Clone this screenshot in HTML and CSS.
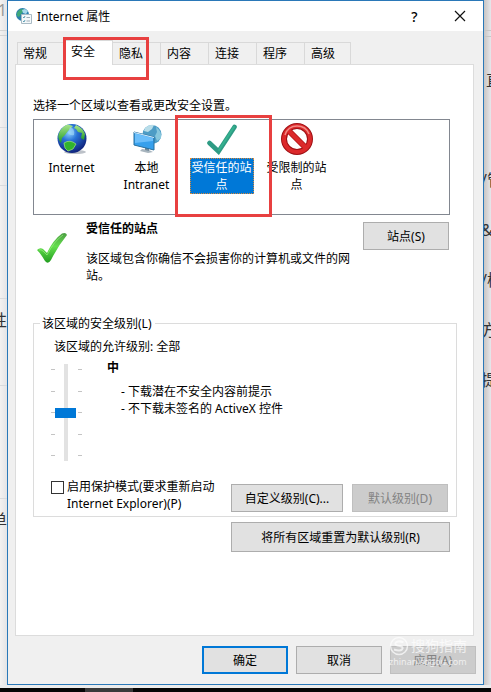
FILE: index.html
```html
<!DOCTYPE html>
<html lang="zh-CN">
<head>
<meta charset="utf-8">
<meta name="viewport" content="width=device-width, initial-scale=1">
<title>Internet 属性</title>
<link rel="stylesheet" href="styles.css">
</head>
<body>
<div class="desktop">
  <div class="behind behind-left" aria-hidden="true">
    <span class="faint">01</span><span class="low">性</span><span class="last">单</span>
  </div>
  <main class="dialog">
    <header class="titlebar">
      <svg class="app-icon" viewBox="0 0 16 16" width="16" height="16">
        <circle cx="6.500" cy="6.500" r="6.500" fill="#2b7fae"/>
        <path d="M1 5Q3 1 7 1L8 3 5 6 3 9Q0 8 1 5Z" fill="#3fa878"/>
        <path d="M6 2l3-1 3 2-2 3-3-1z" fill="#a8d9ec"/>
        <path d="M5.500 6.500h10v9h-10z" fill="#f4f8fa" stroke="#a9bac4"/>
        <path d="M7 9l1 1 1-2M7 13l1 1 1-2" fill="none" stroke="#5f9fb5"/>
        <path d="M10.500 9.500h3.500M10.500 13h3.500" stroke="#9fadb8"/>
      </svg>
      <h1 class="title">Internet 属性</h1>
      <button class="caption help" type="button" aria-label="帮助">?</button>
      <button class="caption" type="button" aria-label="关闭">
        <svg viewBox="0 0 12 12" width="12" height="12"><path d="M1 1l10 10M11 1L1 11" stroke="#111" stroke-width="1.200"/></svg>
      </button>
    </header>

    <nav class="tabs">
      <button class="tab" type="button">常规</button>
      <button class="tab selected" type="button">安全</button>
      <button class="tab" type="button">隐私</button>
      <button class="tab" type="button">内容</button>
      <button class="tab" type="button">连接</button>
      <button class="tab" type="button">程序</button>
      <button class="tab" type="button">高级</button>
      <span class="mark mark-tab"></span>
    </nav>

    <section class="panel">
      <p class="intro">选择一个区域以查看或更改安全设置。</p>
      <div class="zones">
        <button class="zone" type="button">
          <svg viewBox="0 0 32 32" width="32" height="32">
            <defs>
              <radialGradient id="sea" cx=".4" cy=".3" r=".7"><stop offset="0" stop-color="#8fd4ff"/><stop offset=".4" stop-color="#2872d6"/><stop offset="1" stop-color="#10247e"/></radialGradient>
              <linearGradient id="land" x1="0" y1="0" x2="0" y2="1"><stop offset="0" stop-color="#a9e58c"/><stop offset="1" stop-color="#1f9b24"/></linearGradient>
            </defs>
            <ellipse cx="19" cy="29" rx="11" ry="2" fill="#bcc1c8"/>
            <circle cx="16" cy="15.500" r="14.500" fill="url(#sea)"/>
            <path d="M3 10Q6 3 12 1.500L17 3 14 6 12 8 9 12 6 15 5 20Q1 15 3 10Z" fill="url(#land)"/>
            <path d="M20 2Q27 5 29 11L28 17 25 15 26 10 22 9 20 6 18 5Z" fill="url(#land)"/>
            <path d="M8 20Q14 16 20 21L17 26 12 28 9 25Z" fill="#31b42e" stroke="#a5e779" stroke-width=".7"/>
            <path d="M14 4Q19 5 18 12 14 13 12 10Z" fill="#a7dcf8" opacity=".6"/>
          </svg>
          <span class="zone-name">Internet</span>
        </button>
        <button class="zone" type="button">
          <svg viewBox="0 0 32 32" width="32" height="32">
            <circle cx="21" cy="11.500" r="9.500" fill="#4d9cc5"/>
            <path d="M14 5Q18 1 23 2L21 6 17 9 13 8Z" fill="#b8dde9"/>
            <path d="M25 4Q31 8 30 15L26 18 24 13 26 9Z" fill="#87c7dd"/>
            <path d="M18 27l-7-1-2 2 8 2 5-1z" fill="#a8b5be"/>
            <path d="M14 23l4 1v4l-4-1z" fill="#71899a"/>
            <path d="M3 9l20 5v13L3 22z" fill="#36a0ed" stroke="#276f9e"/>
            <path d="M4 10.500l18 4.500v3L4 20z" fill="#82cbff" opacity=".7"/>
            <path d="M3 9l20 5v1L3 10z" fill="#d9eefb"/>
          </svg>
          <span class="zone-name">本地<br>Intranet</span>
        </button>
        <button class="zone active" type="button">
          <svg viewBox="0 0 32 32" width="32" height="32">
            <path d="M3.500 20L12.500 28.500 28.500 4" fill="none" stroke="#2e9b84" stroke-width="4.600" stroke-linecap="round"/>
            <path d="M13 27L28 4" stroke="#35b28f" stroke-width="2" stroke-linecap="round"/>
          </svg>
          <span class="zone-name">受信任的站点</span>
        </button>
        <button class="zone" type="button">
          <svg viewBox="0 0 32 32" width="32" height="32">
            <circle cx="16" cy="16" r="13" fill="#fff" stroke="#9e1014" stroke-width="6"/>
            <path d="M7 7l18 18" stroke="#b5161a" stroke-width="6"/>
            <circle cx="16" cy="16" r="13" fill="none" stroke="#dc292b" stroke-width="4"/>
            <path d="M7 7l18 18" stroke="#dc292b" stroke-width="4"/>
            <path d="M4 12Q7 3 16 3t12 8" fill="none" stroke="#f28b85" stroke-width="1.500"/>
          </svg>
          <span class="zone-name">受限制的站点</span>
        </button>
        <span class="mark mark-zone"></span>
      </div>

      <div class="info">
        <svg class="info-icon" viewBox="0 0 32 32" width="32" height="32">
          <defs><linearGradient id="tick" x1="0" y1="0" x2="0" y2="1"><stop offset="0" stop-color="#4b9c43"/><stop offset=".45" stop-color="#64df4d"/><stop offset="1" stop-color="#229d20"/></linearGradient></defs>
          <path d="M1 18Q4 15 7 17L11 21Q17 8 26 1.500 30 0 31 3 22 14 15 28 12 33 9 29 5 22 1 18Z" fill="url(#tick)"/>
          <path d="M3 18q2-1 4 1l4 4Q18 9 27 3" fill="none" stroke="#a5f58c" opacity=".6"/>
        </svg>
        <div class="info-text">
          <h2>受信任的站点</h2>
          <p>该区域包含你确信不会损害你的计算机或文件的网站。</p>
        </div>
        <button class="btn sites" type="button">站点(S)</button>
      </div>

      <fieldset class="level">
        <legend>该区域的安全级别(L)</legend>
        <p class="allowed"><label for="level">该区域的允许级别: 全部</label></p>
        <div class="level-row">
          <div class="slider">
            <span class="ticks"><i></i><i></i><i></i><i></i><i></i></span>
            <input id="level" type="range" min="0" max="4" value="2">
            <span class="ticks"><i></i><i></i><i></i><i></i><i></i></span>
          </div>
          <div class="level-text">
            <h3>中</h3>
            <ul>
              <li>- 下载潜在不安全内容前提示</li>
              <li>- 不下载未签名的 ActiveX 控件</li>
            </ul>
          </div>
        </div>
        <div class="level-actions">
          <input id="protect" type="checkbox">
          <label for="protect">启用保护模式(要求重新启动 Internet Explorer)(P)</label>
          <button class="btn custom" type="button">自定义级别(C)...</button>
          <button class="btn default" type="button" disabled>默认级别(D)</button>
        </div>
      </fieldset>
      <button class="btn reset" type="button">将所有区域重置为默认级别(R)</button>
    </section>

    <footer class="footer">
      <button class="btn primary" type="button">确定</button>
      <button class="btn" type="button">取消</button>
      <button class="btn" type="button" disabled>应用(A)</button>
      <div class="watermark">
        <svg viewBox="0 0 20 20" width="20" height="20"><circle cx="10" cy="10" r="8.500" fill="none" stroke="#fff" stroke-width="1.500"/><path d="M14.500 6.500Q12 5 9 5.500 5 6.500 7 9q1 .8 4 1 4 1 2 3.500-2 2-8 0" fill="none" stroke="#fff" stroke-width="2"/></svg>
        <span class="wm-name">搜狗指南</span>
        <span class="wm-site">zhinan.sogou.com</span>
      </div>
    </footer>
  </main>
  <div class="behind behind-right" aria-hidden="true">
    <span>直</span><span></span><span class="under">/管</span><span class="under">&amp;</span><span class="under">/模</span><span class="under">方</span><span class="under">提</span>
  </div>
</div>
<div class="taskbar"><span></span></div>
</body>
</html>
```

FILE: styles.css
```css
* { box-sizing: border-box; }

body {
  margin: 0;
  min-height: 100vh;
  display: flex;
  flex-direction: column;
  overflow: hidden;
  background: #ececec;
  color: #000;
  font: 12px/17px "Noto Sans", "Noto Sans CJK SC", sans-serif;
}

h1, h2, h3, p, ul { margin: 0; padding: 0; font-size: 12px; }
ul { list-style: none; }
button { font: inherit; color: inherit; margin: 0; padding: 0; }

.desktop {
  flex: 1;
  display: grid;
  grid-template-columns: 7px minmax(0, 1fr) 7px;
  padding-bottom: 3px;
}

/* Slivers of the page underneath the dialog */
.behind {
  display: flex;
  flex-direction: column;
  overflow: hidden;
  font-size: 16px;
  line-height: 20px;
  color: #333;
  white-space: nowrap;
}
.behind-left {
  align-items: flex-end;
  background: linear-gradient(#d4d4d4, #d4d4d4) 0 30px / 7px 1px no-repeat,
    linear-gradient(#d4d4d4, #d4d4d4) 0 35px / 7px 1px no-repeat,
    linear-gradient(#d9dbdd, #d9dbdd) 0 127px / 7px 1px no-repeat,
    linear-gradient(#d9dbdd, #d9dbdd) 0 185px / 7px 1px no-repeat,
    linear-gradient(#d9dbdd, #d9dbdd) 0 298px / 7px 1px no-repeat,
    linear-gradient(#d9dbdd, #d9dbdd) 0 385px / 7px 1px no-repeat,
    linear-gradient(#d9dbdd, #d9dbdd) 0 498px / 7px 1px no-repeat,
    linear-gradient(90deg, #f4f2f1, #e4e4e6);
}
.faint { color: #999; }
.low { margin-top: 290px; }
.last { margin-top: 180px; }
.behind-right {
  padding-top: 56px;
  background: linear-gradient(#c6c6c6, #c6c6c6) 0 30px / 7px 1px no-repeat,
    linear-gradient(#c6c6c6, #c6c6c6) 0 36px / 7px 1px no-repeat,
    linear-gradient(90deg, #c9c5c3, #e6e7eb);
}
.behind-right span { flex: none; height: 50px; padding-left: 2px; line-height: 49px; }
.behind-right .under { padding-left: 0; margin-left: -3px; }

.dialog {
  display: flex;
  flex-direction: column;
  border: 1px solid #2a78b8;
  background: #f0f0f0;
}

.titlebar {
  display: flex;
  align-items: center;
  height: 30px;
  padding-left: 8px;
  background: #fff;
}
.title { flex: 1; margin-left: 5px; font-weight: 400; }
.caption {
  display: flex;
  align-items: center;
  justify-content: center;
  width: 45px;
  height: 30px;
  border: 0;
  background: none;
}
.caption:last-child { margin-right: 1px; }
.help { font-size: 14px; font-weight: 500; }

.tabs {
  position: relative;
  display: flex;
  align-items: flex-end;
  height: 33px;
  padding-left: 9px;
}
.tab {
  width: 48px;
  height: 22px;
  padding-left: 6px;
  border: 1px solid #d9d9d9;
  border-width: 1px 1px 0 0;
  background: #f0f0f0;
  text-align: left;
}
.tab:first-child { padding-left: 5px; border-left-width: 1px; }
.tab:nth-last-child(2) { width: 46px; }
.tab.selected {
  position: relative;
  height: 25px;
  padding: 0 0 4px 6px;
  margin-bottom: -1px;
  background: #fff;
}

.mark {
  position: absolute;
  z-index: 2;
  border: 3px solid #e84040;
  pointer-events: none;
}
.mark-tab { left: 55px; top: 6px; width: 86px; height: 43px; }
.mark-zone { left: 141px; top: -5px; width: 97px; height: 102px; }

.panel {
  flex: 1;
  margin: 0 9px 0 7px;
  padding: 32px 16px 0 17px;
  border: 1px solid #dcdcdc;
  background: #fff;
}

.zones {
  position: relative;
  display: flex;
  height: 96px;
  margin: 5px 7px 0 0;
  border: 1px solid #828790;
}
.zone {
  display: flex;
  flex-direction: column;
  align-items: center;
  width: 75px;
  padding-top: 3px;
  border: 0;
  background: none;
}
.zone-name {
  width: 64px;
  margin-top: 3px;
  padding: 1px;
  text-align: center;
}
.active .zone-name {
  background: #0078d7;
  color: #fff;
  outline: 1px dotted #d98a3a;
  outline-offset: -1px;
}

.info {
  display: flex;
  align-items: flex-start;
  padding: 5px 8px 0 3px;
}
.info-icon { flex: none; margin-top: 12px; }
.info-text { flex: 1; margin-left: 18px; }
.info-text p { margin-top: 13px; }
.sites { flex: none; margin: 2px 0 0 12px; }

.btn {
  width: 86px;
  height: 28px;
  border: 1px solid #adadad;
  background: #e1e1e1;
}
.btn:disabled { border-color: #bfbfbf; background: #ccc; color: #838383; }

.level {
  min-width: 0;
  margin: 31px 0 0;
  padding: 6px 8px 4px 17px;
  border: 1px solid #dcdcdc;
}
.level legend { margin-left: -11px; padding: 0 3px 0 2px; }
.allowed { margin-left: 3px; }
.level-row { display: flex; margin-top: 4px; }

.slider { display: flex; height: 106px; padding-top: 5px; }
.ticks {
  display: flex;
  flex-direction: column;
  justify-content: space-between;
  width: 4px;
  height: 87px;
  margin-top: 5px;
}
.ticks i { height: 1px; background: #c4c4c4; }
#level {
  appearance: none;
  writing-mode: vertical-lr;
  width: 21px;
  height: 97px;
  margin: 0 2px 0 0;
  background: linear-gradient(#e2e2e2, #e2e2e2) center / 4px 100% no-repeat;
}
#level::-webkit-slider-thumb {
  appearance: none;
  width: 21px;
  height: 10px;
  background: #0078d7;
}

.level-text { margin-left: 25px; }
.level-text ul { margin: 7px 0 0 14px; }
.level-text h3 { font-weight: 700; }

.level-actions { display: flex; align-items: flex-end; margin-top: 13px; }
#protect {
  appearance: none;
  flex: none;
  align-self: flex-start;
  width: 13px;
  height: 13px;
  margin: 3px 3px 0 0;
  border: 1px solid #333;
  background: #fff;
}
.level-actions label { flex: 1; }
.custom { flex: none; width: 112px; margin: 0 9px; }
.default { flex: none; width: 96px; }

.reset {
  display: block;
  width: 219px;
  height: 30px;
  margin: 5px 7px 0 auto;
}

.footer {
  position: relative;
  display: flex;
  justify-content: flex-end;
  gap: 8px;
  padding: 10px 7px 10px;
}
.primary { border: 2px solid #0078d7; }

.watermark {
  position: absolute;
  right: 8px;
  top: 0;
  display: grid;
  grid-template-columns: 20px 64px;
  column-gap: 2px;
  color: #fff;
  opacity: .7;
}
.wm-name { font-size: 14px; line-height: 20px; }
.wm-site { grid-column: 1 / -1; font-size: 9px; line-height: 12px; }

.taskbar { height: 4px; padding-left: 85px; background: #050505; }
.taskbar span { display: block; width: 48px; height: 4px; background: #3a3a3a; }
```
